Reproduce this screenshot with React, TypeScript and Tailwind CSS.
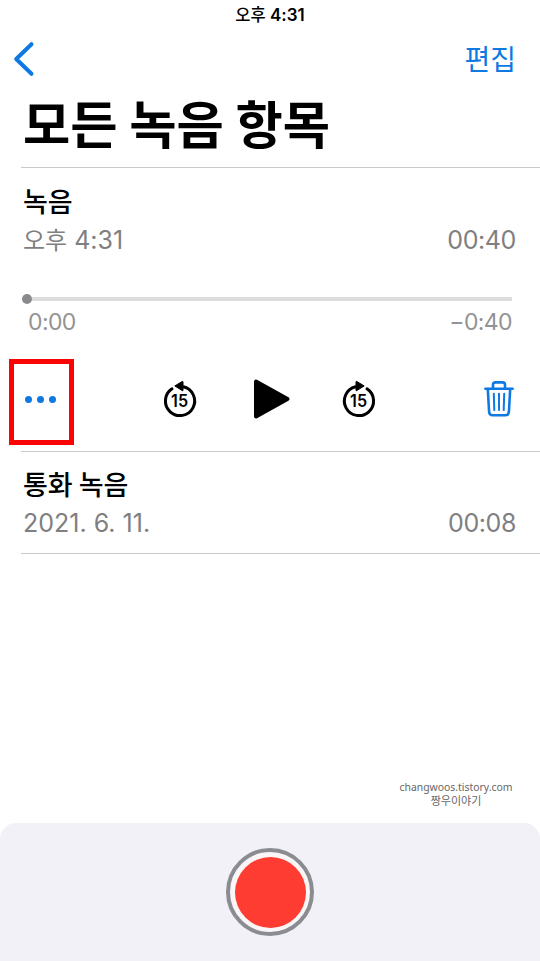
// src/App.tsx
import type { ReactNode } from 'react';

interface Recording {
  title: string;
  date: ReactNode;
  duration: string;
}

const LATIN = "font-['Inter','Noto_Sans_CJK_KR',sans-serif]";
const HANGUL = "font-['Noto_Sans_CJK_KR',sans-serif]";

const recordings: Recording[] = [
  {
    title: '녹음',
    date: (
      <>
        <span className="text-[24px]">오후</span> 4:31
      </>
    ),
    duration: '00:40',
  },
  { title: '통화 녹음', date: '2021. 6. 11.', duration: '00:08' },
];

function RecordingHeader({ item }: { item: Recording }) {
  return (
    <div className="pl-[23px] pr-6">
      <h2 className={`${HANGUL} h-[38px] text-[27px] font-medium leading-[36px] text-black`}>{item.title}</h2>
      <div className="flex h-[38px] justify-between text-[25px] leading-[38px] text-[#7f7f82]">
        <span>{item.date}</span>
        <span className="tracking-[-0.4px]">{item.duration}</span>
      </div>
    </div>
  );
}

function SkipIcon({ forward = false }: { forward?: boolean }) {
  return (
    <svg width="36" height="40" viewBox="0 0 36 40" aria-hidden="true">
      <g transform={forward ? 'translate(36 0) scale(-1 1)' : undefined}>
        <path d="M10 9.8A14.6 14.6 0 1 0 21.5 7.8" fill="none" stroke="#000" strokeWidth="3" strokeLinecap="round" />
        <path d="M12.8 6.9 20.2 2.5Q21 2.1 21 3V11.2Q21 12.1 20.2 11.6Z" stroke="#000" strokeWidth="1" strokeLinejoin="round" />
      </g>
      <text x="17.6" y="27.8" textAnchor="middle" fontSize="17" fontWeight="600" textLength="17" lengthAdjust="spacingAndGlyphs">
        15
      </text>
    </svg>
  );
}

function TrashIcon() {
  return (
    <svg width="32" height="38" viewBox="0 0 32 38" fill="none" stroke="#0f79e2" strokeLinecap="round" strokeLinejoin="round" aria-hidden="true">
      <path d="M2.3 8.7h27.4" strokeWidth="2.4" />
      <path d="M10 8V4.8Q10 2.4 12.5 2.4h7q2.5 0 2.5 2.4V8" strokeWidth="2.6" />
      <path d="M4.8 9l1.3 22.7q.2 3.5 3.5 3.5h12.8q3.3 0 3.5-3.5L27.2 9" strokeWidth="2.6" />
      <path d="M10.8 13.8l.5 16.3M16 13.8v16.3M21.2 13.8l-.5 16.3" strokeWidth="2" />
    </svg>
  );
}

export default function App() {
  return (
    <div className={`${LATIN} flex h-[961px] w-[540px] flex-col overflow-hidden bg-white text-black`}>
      {/* Status bar */}
      <div className="flex h-[30px] justify-center text-[17px] font-semibold leading-[30px]">
        <span>
          <span className="text-[16.5px] font-medium">오후</span> 4:31
        </span>
      </div>

      {/* Navigation */}
      <nav className="flex h-[58px] items-center justify-between pl-3 pr-6">
        <button aria-label="뒤로">
          <svg width="24" height="36" viewBox="0 0 24 36" fill="none" aria-hidden="true">
            <path d="M19.5 3.2 4.2 18l15.3 14.8" stroke="#0f79e2" strokeWidth="4" strokeLinecap="round" strokeLinejoin="round" />
          </svg>
        </button>
        <button className={`${HANGUL} mb-[3px] text-[28px] leading-[40px] text-[#0f79e2]`}>편집</button>
      </nav>

      <h1 className={`${HANGUL} h-[79px] pl-[23px] text-[51.4px] font-bold leading-[68px]`}>모든 녹음 항목</h1>

      {/* Expanded recording */}
      <section className="ml-[21px] h-[284px] border-t border-[#c9c9cb] pt-[15px]">
        <div className="-ml-[21px]">
          <RecordingHeader item={recordings[0]} />

          <div className="mt-[35px] flex h-[10px] items-center pl-[22px] pr-[28px]">
            <div className="size-[10px] rounded-full bg-[#8a8a8d]" />
            <div className="h-1 flex-1 bg-[#dcdcdc]" />
          </div>
          <div className="flex h-[36px] justify-between pl-[28px] pr-[28px] text-[23px] leading-[37px] tracking-[-0.6px] text-[#939395]">
            <span>0:00</span>
            <span>−0:40</span>
          </div>

          <div className="mt-[19px] flex h-[86px] items-start pl-[9px] pr-[25px]">
            <button aria-label="더 보기" className="flex h-[86px] w-[65px] items-center justify-center gap-[5px] border-[5px] border-[#fa0505] pb-[5px] pr-[2px]">
              <span className="size-[7px] rounded-full bg-[#0f79e2]" />
              <span className="size-[7px] rounded-full bg-[#0f79e2]" />
              <span className="size-[7px] rounded-full bg-[#0f79e2]" />
            </button>
            <button aria-label="15초 뒤로" className="ml-[88px] mt-[20px]">
              <SkipIcon />
            </button>
            <button aria-label="재생" className="ml-[54px] mt-[19px]">
              <svg width="40" height="42" viewBox="0 0 40 42" aria-hidden="true">
                <path d="M4 3.6v34.8L35.5 21Z" stroke="#000" strokeWidth="4" strokeLinejoin="round" />
              </svg>
            </button>
            <button aria-label="15초 앞으로" className="ml-[49px] mt-[20px]">
              <SkipIcon forward />
            </button>
            <button aria-label="삭제" className="ml-auto mt-[21px]">
              <TrashIcon />
            </button>
          </div>
        </div>
      </section>

      <section className="ml-[21px] h-[103px] border-y border-[#c9c9cb] pt-[14px]">
        <div className="-ml-[21px]">
          <RecordingHeader item={recordings[1]} />
        </div>
      </section>

      {/* Watermark */}
      <div className="mb-auto ml-auto mr-[27px] mt-[226px] w-[114px] text-center font-['Noto_Sans','Noto_Sans_CJK_KR',sans-serif] text-[10.4px] text-[#666]">
        <p className="whitespace-nowrap leading-[15px]">changwoos.tistory.com</p>
        <p className="text-[11px] leading-[12px]">짱우이야기</p>
      </div>

      {/* Record panel */}
      <footer className="mt-auto flex h-[138px] items-center justify-center rounded-t-[16px] bg-[#f1f1f7]">
        <button aria-label="녹음 시작" className="flex size-[88px] items-center justify-center rounded-full border-[4px] border-[#8b8b92] bg-[#faf6f8]">
          <span className="size-[71px] rounded-full bg-[#fe3c31]" />
        </button>
      </footer>
    </div>
  );
}
